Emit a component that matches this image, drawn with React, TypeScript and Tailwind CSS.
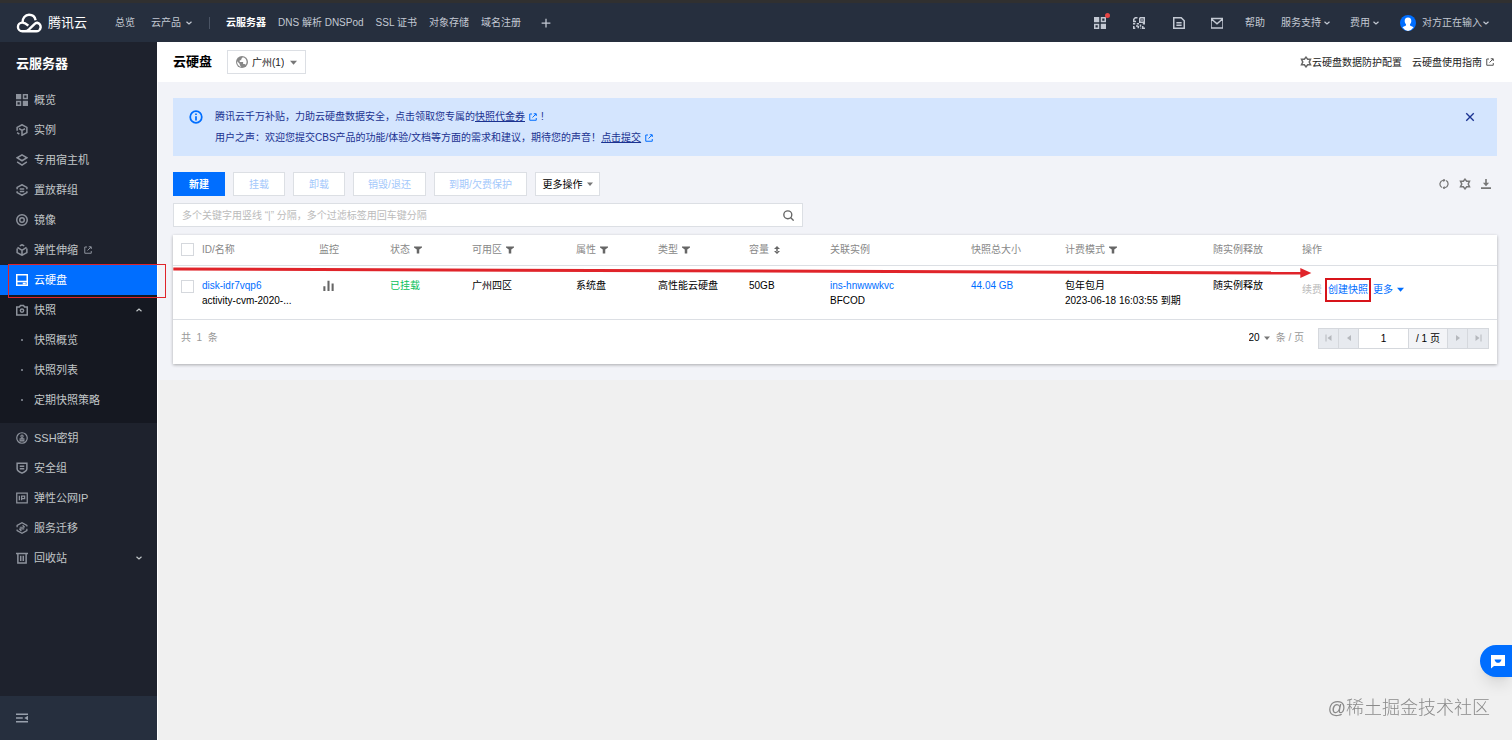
import { ReactNode } from "react";
import clsx from "clsx";

const Svg = ({
  className = "size-3",
  children,
}: {
  className?: string;
  children: ReactNode;
}) => (
  <svg
    viewBox="0 0 16 16"
    fill="none"
    stroke="currentColor"
    strokeWidth="2"
    aria-hidden="true"
    className={clsx("shrink-0", className)}
  >
    {children}
  </svg>
);

const Chevron = ({ up }: { up?: boolean }) => (
  <Svg className="size-2">
    <path d={up ? "M3 10.5 8 6l5 4.5" : "M3 5.5 8 10l5-4.5"} strokeWidth="2.4" />
  </Svg>
);

const Caret = ({ className = "size-2 text-[#888]" }: { className?: string }) => (
  <Svg className={className}>
    <path d="M0 4h16l-8 9z" fill="currentColor" stroke="none" />
  </Svg>
);

const External = ({ className }: { className?: string }) => (
  <Svg className={className}>
    <path d="M6 2H1.5v12.500h13V10M9.500 1.500h5V6M14 2 7 9" />
  </Svg>
);

const GearIcon = ({ className }: { className?: string }) => (
  <Svg className={className}>
    <path d="M8 1.500 10.200 4.300H14L12.300 8l1.700 3.700h-3.800L8 14.500l-2.200-2.800H2L3.700 8 2 4.300h3.800z" />
  </Svg>
);

const GridIcon = () => (
  <Svg>
    <path d="M0 0h7v7H0zM9 9h7v7H9z" fill="currentColor" stroke="none" />
    <path d="M10 1h5v5h-5zM1 10h5v5H1z" />
  </Svg>
);

const Filter = () => (
  <Svg className="size-2 text-[#666]">
    <path d="M0 1h16v2l-5.500 4v8h-5V7L0 3z" fill="currentColor" stroke="none" />
  </Svg>
);

const Sort = () => (
  <Svg className="size-2 text-[#666]">
    <path d="M8 0 14 6H2zM8 16l6-6H2zM6.500 5h3v6h-3z" fill="currentColor" stroke="none" />
  </Svg>
);

const mainItems = [
  { label: "概览", icon: <GridIcon /> },
  {
    label: "实例",
    icon: (
      <Svg>
        <path d="M1.500 9V4.500L8 1l6.500 3.500v7L8 15V8.500l4-2.200M1.500 11.500l3 2M4 6l4 2.500" />
      </Svg>
    ),
  },
  {
    label: "专用宿主机",
    icon: (
      <Svg>
        <path d="M8 1.200 14.500 5 8 9 1.500 5zM1.500 10.500 8 14.700l6.500-4.200" />
      </Svg>
    ),
  },
  {
    label: "置放群组",
    icon: (
      <Svg>
        <path d="M1.500 7V4.500L8 1l6.500 3.500V7M1.500 9.500v2L8 15l6.500-3.500v-2M5 6.500h6M5 10h6" />
      </Svg>
    ),
  },
  {
    label: "镜像",
    icon: (
      <Svg>
        <circle cx="8" cy="8" r="7" />
        <circle cx="8" cy="8" r="3" />
      </Svg>
    ),
  },
  {
    label: "弹性伸缩",
    external: true,
    icon: (
      <Svg>
        <path d="M5 2.600 8 1l3 1.600M14.500 6v5.500L8 15l-6.500-3.500V6M2 4.500l6 4 6-4M8 8v7" />
      </Svg>
    ),
  },
];

const snapshotItems = ["快照概览", "快照列表", "定期快照策略"];

const otherItems = [
  {
    label: "SSH密钥",
    icon: (
      <Svg>
        <circle cx="8" cy="8" r="7" strokeWidth="1.6" />
        <circle cx="8" cy="5.500" r="1.500" strokeWidth="1.500" />
        <path d="M8 7v5M5.500 11.800V9h5v2.800z" strokeWidth="1.500" />
      </Svg>
    ),
  },
  {
    label: "安全组",
    icon: (
      <Svg>
        <path d="M1.500 1.500h13V9c0 3-3.500 4.600-6.500 5.800C5 13.600 1.500 12 1.500 9zM5 5.500h6M5 9h6" />
      </Svg>
    ),
  },
  {
    label: "弹性公网IP",
    icon: (
      <Svg>
        <path d="M1 1.500h14v13H1zM4.500 5v6M7.500 11V5.500h4v3.200h-4" strokeWidth="1.700" />
      </Svg>
    ),
  },
  {
    label: "服务迁移",
    icon: (
      <Svg>
        <path d="M1.500 7V4.500L8 1l6.500 3.500V6M14.500 9v2.500L8 15l-6.500-3.500V10" strokeWidth="1.700" />
        <path d="M4.500 9.200H11M5 7h6.500M8.800 4.300 11.500 7M7.200 12 4.500 9.200" strokeWidth="1.500" />
      </Svg>
    ),
  },
  {
    label: "回收站",
    expandable: true,
    icon: (
      <Svg>
        <path d="M0 2h16M2.500 2v12.500h11V2M6.300 5v7M9.700 5v7" />
      </Svg>
    ),
  },
];

const navLink = "flex h-[30px] items-center gap-1.5 pl-4 pr-3.5 hover:text-white";

const columns: { label: string; width: string; extra?: ReactNode }[] = [
  { label: "ID/名称", width: "w-[117px]" },
  { label: "监控", width: "w-[71px]" },
  { label: "状态", width: "w-[82px]", extra: <Filter /> },
  { label: "可用区", width: "w-[104px]", extra: <Filter /> },
  { label: "属性", width: "w-[82px]", extra: <Filter /> },
  { label: "类型", width: "w-[91px]", extra: <Filter /> },
  { label: "容量", width: "w-[81px]", extra: <Sort /> },
  { label: "关联实例", width: "w-[141px]" },
  { label: "快照总大小", width: "w-[94px]" },
  { label: "计费模式", width: "w-[148px]", extra: <Filter /> },
  { label: "随实例释放", width: "w-[89px]" },
  { label: "操作", width: "w-[195px]" },
];

function Header() {
  return (
    <header className="flex h-[42px] shrink-0 items-center border-t-[3px] border-[#303030] bg-[#262f3e] pl-4 pr-[22px] text-[#c3c9d3]">
      <a href="#" className="flex w-[99px] items-center gap-1.5 text-[13px] text-white">
        <svg
          viewBox="0 0 26 20"
          fill="none"
          stroke="currentColor"
          strokeWidth="2.4"
          className="h-5 w-[26px]"
          aria-hidden="true"
        >
          <path d="M6.600 9.500C6.300 5 9.300 1.800 13 1.800c3.600 0 6 2.400 6.600 5.400" />
          <path d="M12.300 12.700C9.800 10.300 8.500 9.600 6.300 9.600a4.300 4.300 0 0 0 0 8.700H9c2 0 3-1 4.500-2.400l4.700-4.600c1-1 2-1.600 3-1.500a4.300 4.300 0 0 1-1.200 8.500H9" />
        </svg>
        腾讯云
      </a>
      <nav className="flex items-center gap-3 whitespace-nowrap">
        <a href="#" className="mr-1">总览</a>
        <button className="flex items-center gap-1">
          云产品 <Chevron />
        </button>
        <span className="mx-1 h-3 w-px bg-[#4a5464]" />
        <a href="#" className="font-bold text-white">云服务器</a>
        <a href="#">DNS 解析 DNSPod</a>
        <a href="#">SSL 证书</a>
        <a href="#">对象存储</a>
        <a href="#">域名注册</a>
        <button aria-label="添加" className="ml-2">
          <Svg className="size-2.5">
            <path d="M8 1v14M1 8h14" />
          </Svg>
        </button>
      </nav>
      <div className="ml-auto flex items-center whitespace-nowrap">
        <button aria-label="控制台" className="relative mr-[27px]">
          <GridIcon />
          <span className="absolute -right-1 -top-1 size-[5px] rounded-full bg-[#e54545]" />
        </button>
        <button aria-label="扫码" className="mr-7">
          <Svg>
            <path d="M6 1H3L1 3v3h3M9 1h6v6H9V1M12 3v2M0 9h3M5 9h3M1 12v3h2M4 12h3M7 12v3M10 10v3M13 9h3M13 12v3h3M10 15h1" />
          </Svg>
        </button>
        <button aria-label="文档" className="mr-[26px]">
          <Svg>
            <path d="M1 1h10l4 4v10H1zM4.500 7.500h7M4.500 11h7" />
          </Svg>
        </button>
        <button aria-label="消息" className="mr-[22px]">
          <Svg>
            <path d="M0 2h16v12.500H0zM1 3l7 6 7-6" />
          </Svg>
        </button>
        <a href="#" className="mr-4">帮助</a>
        <button className="mr-[19px] flex items-center gap-0.5">
          服务支持 <Chevron />
        </button>
        <button className="mr-5 flex items-center gap-0.5">
          费用 <Chevron />
        </button>
        <button className="flex items-center">
          <svg viewBox="0 0 16 16" className="mr-1.5 size-4" aria-hidden="true">
            <circle cx="8" cy="8" r="8" fill="#006eff" />
            <path
              d="M8 2.500c2.300 0 3.500 1.600 3.300 3.700-.1 1.500-.7 2.400-1.300 3v1.300l3.600 1.800A8 8 0 0 1 8 16a8 8 0 0 1-5.600-3.700L6 10.500V9.200c-.6-.6-1.200-1.500-1.300-3C4.500 4.100 5.700 2.500 8 2.500z"
              fill="#fff"
            />
          </svg>
          对方正在输入
          <Chevron />
        </button>
      </div>
    </header>
  );
}

function Sidebar() {
  return (
    <aside className="flex w-[157px] shrink-0 flex-col bg-[#1e222d] text-[11px] text-[#c1c6c8]">
      <h2 className="flex h-[43px] items-center pl-4 text-[13px] font-bold text-white">云服务器</h2>
      <nav>
        {mainItems.map((item) => (
          <a key={item.label} href="#" className={navLink}>
            <span className="text-[#8d929c]">{item.icon}</span>
            {item.label}
            {item.external && <External className="size-2 text-[#8d929c]" />}
          </a>
        ))}
        <a href="#" aria-current="page" className={clsx(navLink, "relative bg-[#006eff] text-white")}>
          <Svg>
            <path d="M1 1h14v14H1zM1 10h14M9 12.700h4" />
          </Svg>
          云硬盘
          <span className="absolute -bottom-[3px] -right-[9px] -top-px left-2 z-10 border border-[#e0242a]" />
        </a>
        <div className="bg-[#151821] pb-2">
          <button className={clsx(navLink, "w-full")} aria-expanded="true">
            <Svg className="size-3 text-[#8d929c]">
              <path d="M1 4h3.500L6 2h4l1.500 2H15v10.500H1z" />
              <circle cx="8" cy="8.800" r="2.200" />
            </Svg>
            快照
            <span className="ml-auto">
              <Chevron up />
            </span>
          </button>
          {snapshotItems.map((label) => (
            <a key={label} href="#" className={navLink}>
              <span className="flex w-3 justify-center">
                <span className="size-0.5 rounded-full bg-[#8d929c]" />
              </span>
              {label}
            </a>
          ))}
        </div>
        {otherItems.map((item) => (
          <a key={item.label} href="#" className={navLink}>
            <span className="text-[#8d929c]">{item.icon}</span>
            {item.label}
            {item.expandable && (
              <span className="ml-auto">
                <Chevron />
              </span>
            )}
          </a>
        ))}
      </nav>
      <div className="mt-auto flex h-11 items-center bg-[#262f3e] pl-4">
        <button aria-label="收起菜单" className="text-[#98a0ac]">
          <Svg>
            <path d="M0 3h16M0 8h9M0 13h16" />
            <path d="M16 5v6l-5-3z" fill="currentColor" stroke="none" />
          </Svg>
        </button>
      </div>
    </aside>
  );
}

function Notice() {
  return (
    <div className="flex items-start bg-[#d4e5fe] px-4 py-2 text-[#1b3291]">
      <Svg className="mr-3 mt-1 size-[14px] text-[#006eff]">
        <circle cx="8" cy="8" r="6.600" />
        <path d="M8 7v5M8 4v1.800" />
      </Svg>
      <div className="leading-[21px]">
        <p className="flex items-center">
          腾讯云千万补贴，力助云硬盘数据安全，点击领取您专属的
          <a href="#" className="mr-1 flex items-center gap-1 underline">
            快照代金券 <External className="size-2 text-[#006eff]" />
          </a>
          !
        </p>
        <p className="flex items-center">
          用户之声：欢迎您提交CBS产品的功能/体验/文档等方面的需求和建议，期待您的声音！
          <a href="#" className="flex items-center gap-1 underline">
            点击提交 <External className="size-2 text-[#006eff]" />
          </a>
        </p>
      </div>
      <button aria-label="关闭" className="ml-auto mr-1.5 mt-1.5">
        <Svg className="size-2.5">
          <path d="m2 2 12 12M14 2 2 14" strokeWidth="2.200" />
        </Svg>
      </button>
    </div>
  );
}

function Toolbar() {
  const disabled = "h-6 border border-[#dcdfe4] bg-white text-[#a3c8fb]";
  return (
    <div className="mt-4 flex items-center gap-2">
      <button className="h-6 w-[52px] bg-[#006eff] font-bold text-white">新建</button>
      <button disabled className={clsx(disabled, "w-[52px]")}>挂载</button>
      <button disabled className={clsx(disabled, "w-[52px]")}>卸载</button>
      <button disabled className={clsx(disabled, "w-[73px]")}>销毁/退还</button>
      <button disabled className={clsx(disabled, "w-[93px]")}>到期/欠费保护</button>
      <button className="flex h-6 w-[65px] items-center justify-center gap-1 border border-[#dcdfe4] bg-white text-black">
        更多操作 <Caret className="size-1.5 text-[#777]" />
      </button>
      <div className="ml-auto mr-1.5 flex items-center gap-2.5 text-[#777]">
        <button aria-label="刷新">
          <Svg className="size-2.5">
            <path d="M4.500 13.500A6.300 6.300 0 0 1 6.500 2H9M11.500 2.500A6.300 6.300 0 0 1 9.500 14H7" />
            <path d="M7-1v6l3.500-3zM9 11v6l-3.500-3z" fill="currentColor" stroke="none" />
          </Svg>
        </button>
        <button aria-label="设置">
          <GearIcon className="size-3" />
        </button>
        <button aria-label="下载">
          <Svg className="size-2.5">
            <path d="M8 0v7M0 14.500h16" strokeWidth="2.600" />
            <path d="M3 6h10l-5 5.500z" fill="currentColor" stroke="none" />
          </Svg>
        </button>
      </div>
    </div>
  );
}

function DiskTable() {
  const checkbox = "block size-[13px] appearance-none border border-[#d5d8dd] bg-white";
  return (
    <table className="w-full table-fixed text-left leading-[15px]">
      <thead>
        <tr className="h-[30px] border-b border-[#dcdfe4] text-[#888]">
          <th className="w-[29px] pl-2">
            <input type="checkbox" aria-label="全选" className={checkbox} />
          </th>
          {columns.map(({ label, width, extra }) => (
            <th key={label} className={clsx(width, "font-normal")}>
              <span className="flex items-center gap-1">
                {label} {extra}
              </span>
            </th>
          ))}
        </tr>
      </thead>
      <tbody>
        <tr className="h-[54px] border-b border-[#dcdfe4] align-top text-black *:pt-3">
          <td className="pl-2">
            <input type="checkbox" aria-label="disk-idr7vqp6" className={clsx(checkbox, "mt-0.5")} />
          </td>
          <td>
            <a href="#" className="block text-[#006eff]">disk-idr7vqp6</a>
            activity-cvm-2020-...
          </td>
          <td>
            <button aria-label="监控" className="ml-1 mt-0.5 block text-[#666]">
              <Svg className="size-[11px]">
                <path d="M2 16V9M8 16V1M14 16V5" strokeWidth="3" />
              </Svg>
            </button>
          </td>
          <td className="text-[#0abf5b]">已挂载</td>
          <td>广州四区</td>
          <td>系统盘</td>
          <td>高性能云硬盘</td>
          <td>50GB</td>
          <td>
            <a href="#" className="block text-[#006eff]">ins-hnwwwkvc</a>
            BFCOD
          </td>
          <td>
            <a href="#" className="text-[#006eff]">44.04 GB</a>
          </td>
          <td>
            包年包月
            <br />
            2023-06-18 16:03:55 到期
          </td>
          <td>随实例释放</td>
          <td>
            <div className="flex items-center">
              <button disabled className="mr-[3px] text-[#bbb]">续费</button>
              <button className="h-6 w-[46px] whitespace-nowrap border-2 border-[#d7141a] text-[#006eff]">
                创建快照
              </button>
              <button className="ml-0.5 flex items-center gap-1 text-[#006eff]">
                更多 <Caret className="size-[7px]" />
              </button>
            </div>
          </td>
        </tr>
      </tbody>
    </table>
  );
}

function Pagination() {
  const step = "flex w-5 items-center justify-center bg-[#e7eaef] text-[#b5b8bd]";
  return (
    <div className="flex h-11 items-start px-2 pt-2 text-[#999]">
      <span className="leading-5">共&nbsp; 1 &nbsp;条</span>
      <label className="ml-auto mr-3.5 flex items-center leading-5">
        <select aria-label="每页条数" className="field-sizing-content appearance-none bg-transparent text-black">
          <option>20</option>
        </select>
        <Caret className="ml-1 mr-1.5 size-1.5 text-[#777]" />
        条 / 页
      </label>
      <div className="flex h-[21px] divide-x divide-[#d5d8dd] border border-[#d5d8dd]">
        <button disabled aria-label="第一页" className={step}>
          <Svg className="size-2">
            <path d="M2 1v14" />
            <path d="M13 2v12L5 8z" fill="currentColor" stroke="none" />
          </Svg>
        </button>
        <button disabled aria-label="上一页" className={step}>
          <Svg className="size-2">
            <path d="M12 2v12L4 8z" fill="currentColor" stroke="none" />
          </Svg>
        </button>
        <input aria-label="页码" defaultValue="1" className="w-[50px] bg-white text-center text-black" />
        <span className="flex w-[39px] items-center justify-center bg-[#f3f4f7] text-black">/ 1 页</span>
        <button disabled aria-label="下一页" className={step}>
          <Svg className="size-2">
            <path d="M4 2v12l8-6z" fill="currentColor" stroke="none" />
          </Svg>
        </button>
        <button disabled aria-label="最后一页" className={step}>
          <Svg className="size-2">
            <path d="M3 2v12l8-6z" fill="currentColor" stroke="none" />
            <path d="M14 1v14" />
          </Svg>
        </button>
      </div>
    </div>
  );
}

export default function App() {
  return (
    <div className="flex min-h-screen flex-col bg-[#f0f0f0] font-['Liberation_Sans','Noto_Sans_CJK_SC',sans-serif] text-[10px]">
      <Header />
      <div className="flex flex-1">
        <Sidebar />
        <main className="min-w-0 flex-1 border-l border-white">
          <div className="flex h-10 items-center bg-white pl-[15px] pr-[18px]">
            <h1 className="mr-[15px] text-[13px] font-bold text-black">云硬盘</h1>
            <label className="flex h-6 items-center border border-[#dcdfe4] px-2 text-[#222]">
              <svg viewBox="0 0 16 16" className="mr-1 size-3 shrink-0 text-[#888]" aria-hidden="true">
                <circle cx="8" cy="8" r="8" fill="currentColor" />
                <path
                  d="M9 1.500 7 4v1.500H5V8h4.500v2.500h2l1.300 1.200A6.500 6.500 0 0 0 11 2.300zM1.600 7 5 10.500V12l2 2.500A6.500 6.500 0 0 1 1.600 7z"
                  fill="#fff"
                />
              </svg>
              <select aria-label="地域" className="field-sizing-content appearance-none bg-transparent">
                <option>广州(1)</option>
              </select>
              <Caret className="ml-1.5 size-[7px] text-[#777]" />
            </label>
            <div className="ml-auto flex items-center gap-2.5 text-[#222]">
              <a href="#" className="flex items-center">
                <GearIcon className="size-3 text-[#666]" />
                云硬盘数据防护配置
              </a>
              <a href="#" className="flex items-center gap-1">
                云硬盘使用指南 <External className="size-2 text-[#555]" />
              </a>
            </div>
          </div>

          <div className="bg-[#f2f3f8] px-[15px] py-4">
            <Notice />
            <Toolbar />
            <div className="mt-[7px] flex h-6 w-[630px] max-w-full items-center border border-[#dcdfe4] bg-white px-2">
              <input
                aria-label="搜索"
                placeholder="多个关键字用竖线 “|” 分隔，多个过滤标签用回车键分隔"
                className="flex-1 outline-none placeholder:text-[#bbb]"
              />
              <button aria-label="搜索云硬盘" className="text-[#666]">
                <Svg className="size-[11px]">
                  <circle cx="7" cy="7" r="5.800" />
                  <path d="m11 11 4.500 4.500" />
                </Svg>
              </button>
            </div>
            <div className="relative mt-2 bg-white shadow-[0_1px_3px_rgba(0,0,0,0.3)]">
              <DiskTable />
              <Pagination />
              {/* Arrow pointing at the snapshot action */}
              <svg
                viewBox="0 0 1138 12"
                fill="none"
                className="pointer-events-none absolute left-0 top-8 w-[86%]"
                aria-hidden="true"
              >
                <path d="M0 2 1130 6" stroke="#e0242a" strokeWidth="3" />
                <path d="M1127 1v10l11-5z" fill="#e0242a" />
              </svg>
            </div>
          </div>
        </main>
      </div>

      <button
        aria-label="在线客服"
        className="fixed bottom-[63px] right-0 flex h-8 w-8 items-center justify-center rounded-l-full bg-[#006eff] pl-1 text-white shadow-lg"
      >
        <svg viewBox="0 0 16 16" className="size-4" aria-hidden="true">
          <path d="M1 2h14v11H4l-3 2.500z" fill="#fff" />
          <path d="M4.500 6.500h7C11 9 9.500 9.800 8 9.800S5 9 4.500 6.500z" fill="#006eff" />
        </svg>
      </button>
      <p className="pointer-events-none fixed bottom-[18px] right-[22px] text-[18px] font-light leading-7 text-[#8a8a8a]">
        @稀土掘金技术社区
      </p>
    </div>
  );
}
